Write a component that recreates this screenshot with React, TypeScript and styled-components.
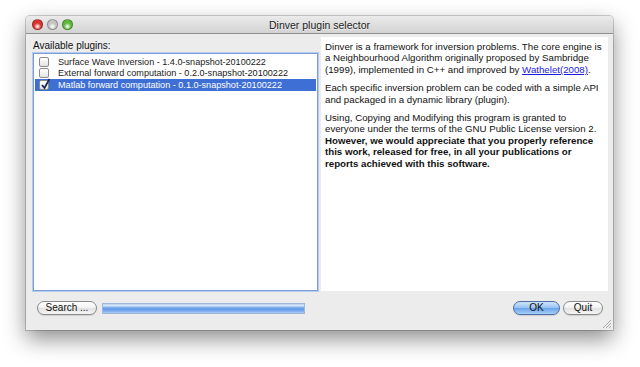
import React from "react";
import styled, { createGlobalStyle } from "styled-components";

const GlobalStyle = createGlobalStyle`
  html, body {
    margin: 0;
    padding: 0;
    background: #ffffff;
  }
  body {
    font-family: "Liberation Sans", Arial, sans-serif;
    font-size: 10px;
    color: #111;
  }
`;

const Page = styled.div`
  width: 640px;
  height: 367px;
  padding: 16px 0 0 26px;
  box-sizing: border-box;
  overflow: hidden;
`;

const Window = styled.div`
  position: relative;
  width: 587px;
  height: 314px;
  background: #ececec;
  border-radius: 4px 4px 0 0;
  box-shadow: 0 9px 22px rgba(0, 0, 0, 0.45), 0 0 0 1px rgba(0, 0, 0, 0.18);
  display: flex;
  flex-direction: column;
`;

const TitleBar = styled.div`
  position: relative;
  height: 17px;
  border-radius: 4px 4px 0 0;
  background: linear-gradient(#ebebeb, #d3d3d3);
  border-bottom: 1px solid #8f8f8f;
  display: flex;
  align-items: center;
  justify-content: center;
  .title {
    font-size: 10.5px;
    color: #1c1c1c;
    text-shadow: 0 1px 0 rgba(255, 255, 255, 0.6);
  }
`;

const Lights = styled.div`
  position: absolute;
  left: 6px;
  top: 3px;
  display: flex;
  gap: 4px;
`;

const Light = styled.span<{ $color: string }>`
  width: 11px;
  height: 11px;
  border-radius: 50%;
  box-sizing: border-box;
  border: 1px solid rgba(0, 0, 0, 0.28);
  background: radial-gradient(circle at 50% 72%, #ffffff 0%, ${(p) => p.$color} 45%, ${(p) => p.$color} 100%);
`;

const Body = styled.div`
  flex: 1;
  display: flex;
  flex-direction: column;
  padding: 3px 5px 0 7px;
`;

const MainRow = styled.div`
  display: flex;
  gap: 3px;
  height: 254px;
`;

const LeftColumn = styled.div`
  width: 285px;
  display: flex;
  flex-direction: column;
  .label {
    height: 16px;
    line-height: 15px;
    padding-top: 1px;
    box-sizing: border-box;
  }
`;

const ListBox = styled.div`
  flex: 1;
  background: #fff;
  border: 1px solid #7d9ed4;
  box-shadow: 0 0 0 1px #b3cbee;
  padding: 2px 1px;
`;

const Row = styled.div<{ $selected?: boolean }>`
  display: flex;
  align-items: center;
  height: 11.5px;
  padding-left: 4px;
  font-size: 9.1px;
  white-space: nowrap;
  background: ${(p) => (p.$selected ? "#3d6fd4" : "transparent")};
  color: ${(p) => (p.$selected ? "#fff" : "#1a1a1a")};
`;

const Check = styled.span<{ $checked?: boolean }>`
  position: relative;
  width: 10px;
  height: 10px;
  box-sizing: border-box;
  margin-right: 9px;
  border: 1px solid #8c8c8c;
  border-radius: 2px;
  background: linear-gradient(#ffffff, #e4e4e4);
  svg {
    position: absolute;
    left: 0px;
    top: -3px;
  }
`;

const TextPanel = styled.div`
  flex: 1;
  background: #fff;
  padding: 4px 4px 0 4px;
  font-size: 9.7px;
  line-height: 11.4px;
  white-space: nowrap;
  p {
    margin: 0 0 7px;
  }
  a {
    color: #1a1ae0;
    text-decoration: underline;
  }
  b {
    font-weight: bold;
  }
`;

const BottomRow = styled.div`
  display: flex;
  align-items: center;
  margin-top: 10px;
  padding-left: 4px;
  height: 14px;
`;

const PillButton = styled.button<{ $primary?: boolean }>`
  height: 14px;
  padding: 0;
  border-radius: 7px;
  font-family: inherit;
  font-size: 10px;
  color: #111;
  line-height: 12px;
  border: 1px solid ${(p) => (p.$primary ? "#4c6fa8" : "#8a8a8a")};
  background: ${(p) =>
    p.$primary
      ? "linear-gradient(#cfe3fb 0%, #9cc5f3 45%, #6aa4ea 55%, #a9d1fa 100%)"
      : "linear-gradient(#ffffff 0%, #f3f3f3 45%, #e2e2e2 55%, #f6f6f6 100%)"};
  box-shadow: 0 1px 1px rgba(0, 0, 0, 0.12);
`;

const Progress = styled.div`
  width: 203px;
  height: 11px;
  margin-left: 5px;
  background: linear-gradient(
    #b9d3f3 0%,
    #d6e6fa 18%,
    #8ab6ee 36%,
    #5f98e3 55%,
    #7aaaf0 75%,
    #a9ccf6 100%
  );
  border: 1px solid #9fb7d8;
  box-sizing: border-box;
`;

const Spacer = styled.div`
  flex: 1;
`;

const Grip = styled.svg`
  position: absolute;
  right: 2px;
  bottom: 2px;
`;

const plugins = [
  { name: "Surface Wave Inversion - 1.4.0-snapshot-20100222", checked: false },
  { name: "External forward computation - 0.2.0-snapshot-20100222", checked: false },
  { name: "Matlab forward computation - 0.1.0-snapshot-20100222", checked: true },
];

const App = () => {
  return (
    <Page>
      <GlobalStyle />
      <Window>
        <TitleBar>
          <Lights>
            <Light $color="#d8342c" />
            <Light $color="#c4c4c4" />
            <Light $color="#5fb83a" />
          </Lights>
          <span className="title">Dinver plugin selector</span>
        </TitleBar>
        <Body>
          <MainRow>
            <LeftColumn>
              <div className="label">Available plugins:</div>
              <ListBox>
                {plugins.map((p) => (
                  <Row key={p.name} $selected={p.checked}>
                    <Check $checked={p.checked}>
                      {p.checked && (
                        <svg width="11" height="12" viewBox="0 0 11 12">
                          <path d="M2 7 L4.5 10 L9.5 1" fill="none" stroke="#1b2a4a" strokeWidth="1.8" />
                        </svg>
                      )}
                    </Check>
                    {p.name}
                  </Row>
                ))}
              </ListBox>
            </LeftColumn>
            <TextPanel>
              <p>
                Dinver is a framework for inversion problems. The core engine is
                <br />a Neighbourhood Algorithm originally proposed by Sambridge
                <br />
                (1999), implemented in C++ and improved by <a href="#">Wathelet(2008)</a>.
              </p>
              <p>
                Each specific inversion problem can be coded with a simple API
                <br />
                and packaged in a dynamic library (plugin).
              </p>
              <p>
                Using, Copying and Modifying this program is granted to
                <br />
                everyone under the terms of the GNU Public License version 2.
                <br />
                <b>However, we would appreciate that you properly reference</b>
                <br />
                <b>this work, released for free, in all your publications or</b>
                <br />
                <b>reports achieved with this software.</b>
              </p>
            </TextPanel>
          </MainRow>
          <BottomRow>
            <PillButton style={{ width: 60 }}>Search ...</PillButton>
            <Progress />
            <Spacer />
            <PillButton $primary style={{ width: 47 }}>
              OK
            </PillButton>
            <PillButton style={{ width: 40, marginLeft: 3, marginRight: 5 }}>Quit</PillButton>
          </BottomRow>
        </Body>
        <Grip width="9" height="9" viewBox="0 0 9 9">
          <path d="M1 9 L9 1 M4 9 L9 4 M7 9 L9 7" stroke="#9a9a9a" strokeWidth="0.8" />
        </Grip>
      </Window>
    </Page>
  );
};

export default App;
